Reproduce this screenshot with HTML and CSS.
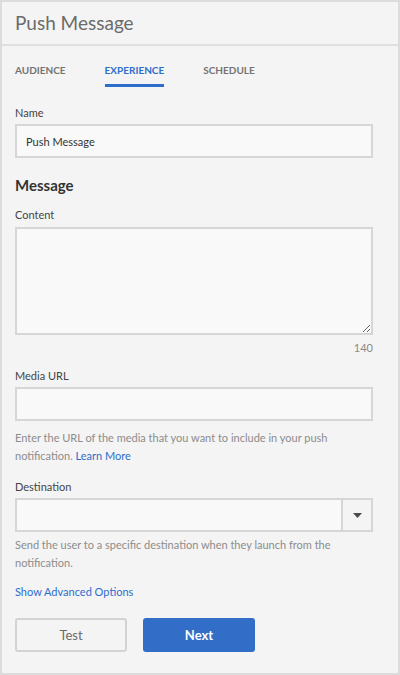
FILE: index.html
```html
<!DOCTYPE html>
<html>
<head>
<meta charset="utf-8">
<link rel="stylesheet" href="styles.css">
</head>
<body>
<div class="panel">
  <div class="header">Push Message</div>
  <div class="tabs">
    <div class="tab">AUDIENCE</div>
    <div class="tab active">EXPERIENCE</div>
    <div class="tab">SCHEDULE</div>
  </div>
  <div class="form">
    <div class="label l-name">Name</div>
    <input class="field" type="text" value="Push Message">
    <div class="section">Message</div>
    <div class="label l-content">Content</div>
    <textarea class="area"></textarea>
    <div class="count">140</div>
    <div class="label l-media">Media URL</div>
    <input class="field" type="text">
    <div class="help h-media">Enter the URL of the media that you want to include in your push notification. <span class="link">Learn More</span></div>
    <div class="label l-dest">Destination</div>
    <div class="select">
      <div class="select-value"></div>
      <div class="select-btn"><svg width="9" height="5" viewBox="0 0 9 5"><path d="M0 0H9L4.5 5Z" fill="#4a4a4a"/></svg></div>
    </div>
    <div class="help h-dest">Send the user to a specific destination when they launch from the notification.</div>
    <div class="link adv">Show Advanced Options</div>
    <div class="buttons">
      <div class="btn btn-test">Test</div>
      <div class="btn btn-next">Next</div>
    </div>
  </div>
</div>
</body>
</html>
```
FILE: styles.css
```css
* { box-sizing: border-box; }
html, body { margin: 0; padding: 0; }
body {
  width: 400px;
  height: 675px;
  font-family: "Lato", "Open Sans", sans-serif;
  background: #f4f4f4;
}
.panel {
  width: 400px;
  height: 675px;
  border: 2px solid #dcdcdc;
  background: #f4f4f4;
  display: flex;
  flex-direction: column;
}
.header {
  height: 44px;
  border-bottom: 2px solid #e0e0e0;
  padding-left: 13px;
  font-size: 19px;
  line-height: 42px;
  color: #6b6b6b;
  font-weight: 400;
}
.tabs {
  display: flex;
  padding: 17px 0 0 13px;
}
.tab {
  font-size: 10px;
  line-height: 14px;
  font-weight: 700;
  color: #737373;
  padding-bottom: 7px;
  border-bottom: 3px solid transparent;
  margin-right: 39px;
}
.tab.active {
  color: #2d6ecd;
  border-bottom-color: #2d6ecd;
}
.form {
  padding: 0 25px 0 13px;
  display: flex;
  flex-direction: column;
}
.label {
  font-size: 11px;
  line-height: 14px;
  color: #444;
}
.l-name { margin-top: 19px; }
.l-content { margin-top: 13px; }
.l-media { margin-top: 14px; }
.l-dest { margin-top: 15px; }
.field {
  margin-top: 4px;
  height: 34px;
  width: 100%;
  border: 2px solid #d6d6d6;
  background: #f9f9f9;
  font-family: inherit;
  font-size: 11px;
  color: #333;
  padding: 0 9px;
  outline: none;
}
.section {
  margin-top: 17px;
  font-size: 15px;
  line-height: 20px;
  font-weight: 700;
  color: #333;
}
.area {
  margin-top: 5px;
  height: 108px;
  width: 100%;
  border: 2px solid #d6d6d6;
  background: #f9f9f9;
  resize: vertical;
  font-family: inherit;
  outline: none;
}
.count {
  margin-top: 6px;
  text-align: right;
  font-size: 11px;
  line-height: 14px;
  color: #8a8a8a;
}
.help {
  font-size: 11px;
  line-height: 18px;
  color: #8c8c8c;
}
.h-media { margin-top: 8px; }
.h-dest { margin-top: 4px; }
.link { color: #2d6ecd; }
.adv {
  margin-top: 13px;
  font-size: 11px;
  line-height: 14px;
}
.select {
  margin-top: 4px;
  height: 34px;
  display: flex;
  border: 2px solid #d6d6d6;
  background: #f9f9f9;
}
.select-value { flex: 1; }
.select-btn {
  width: 30px;
  border-left: 2px solid #d6d6d6;
  background: #f4f4f4;
  display: flex;
  align-items: center;
  justify-content: center;
}
.buttons {
  margin-top: 19px;
  display: flex;
  gap: 16px;
}
.btn {
  height: 34px;
  width: 112px;
  border-radius: 3px;
  display: flex;
  align-items: center;
  justify-content: center;
  font-size: 13px;
}
.btn-test {
  border: 2px solid #d3d3d3;
  color: #6b6b6b;
  background: #f4f4f4;
}
.btn-next {
  background: #326dc8;
  color: #fff;
  font-weight: 700;
}
```
